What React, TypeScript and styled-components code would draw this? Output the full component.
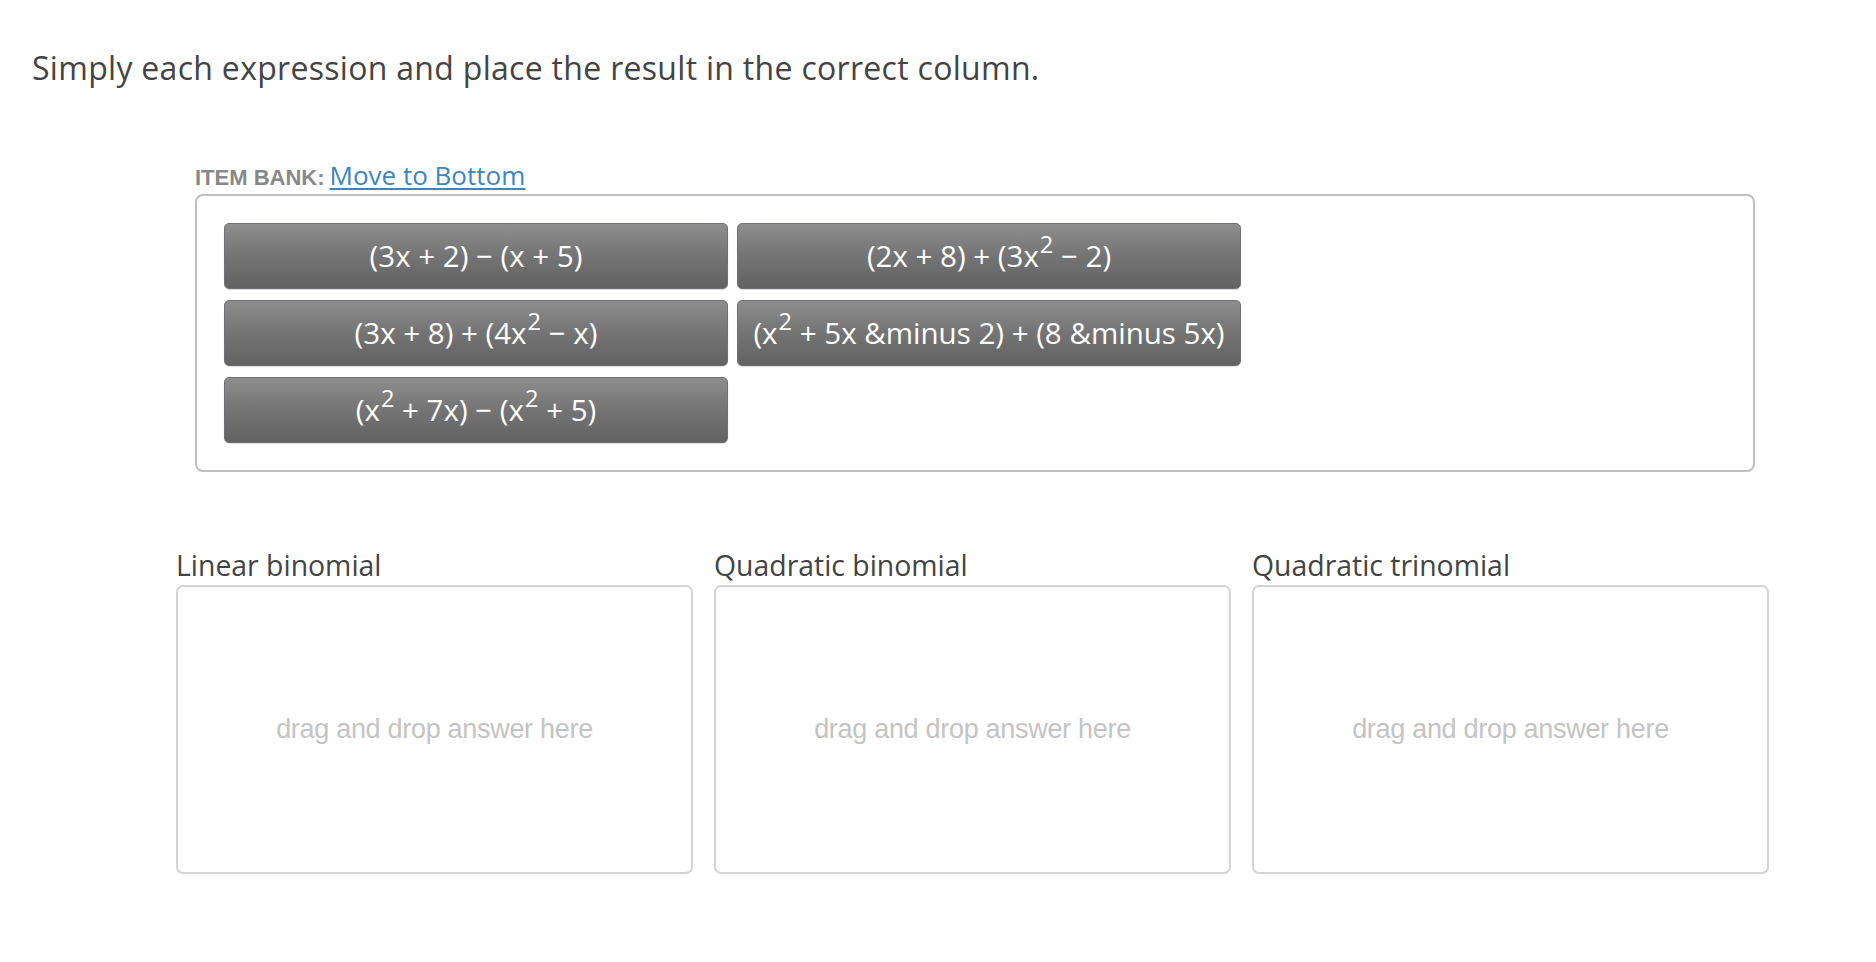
import React from 'react'
import styled, { createGlobalStyle } from 'styled-components'

const GlobalStyle = createGlobalStyle`
  html, body {
    margin: 0;
    padding: 0;
    background: #ffffff;
  }
  body {
    font-family: 'Open Sans', 'Noto Sans', sans-serif;
  }
`

const Page = styled.div`
  padding: 46px 0 60px 32px;
`

const Instruction = styled.p`
  margin: 0;
  font-family: 'Open Sans', 'Noto Sans', sans-serif;
  font-size: 32px;
  line-height: 44px;
  letter-spacing: 0.3px;
  color: #444444;
`

const Workspace = styled.div`
  margin: 67px 0 0 144px;
  width: 1594px;
`

const BankSection = styled.section`
  margin-left: 19px;
  width: 1560px;
`

const BankHeader = styled.div`
  display: flex;
  align-items: baseline;
  gap: 5px;
  height: 37px;
`

const BankLabel = styled.span`
  font-family: 'Liberation Sans', Arial, sans-serif;
  font-weight: 700;
  font-size: 22px;
  color: #888888;
`

const BankLink = styled.a`
  font-family: 'Open Sans', 'Noto Sans', sans-serif;
  font-size: 26px;
  color: #3a86c4;
  text-decoration: underline;
  text-underline-offset: 3px;
  cursor: pointer;
`

const BankBox = styled.div`
  box-sizing: border-box;
  height: 278px;
  border: 2px solid #bfbfbf;
  border-radius: 8px;
  padding: 27px 27px;
  display: grid;
  grid-template-columns: repeat(2, 504px);
  grid-auto-rows: 66px;
  column-gap: 9px;
  row-gap: 11px;
`

const Tile = styled.div`
  box-sizing: border-box;
  display: flex;
  align-items: center;
  justify-content: center;
  padding-bottom: 2px;
  border: 1px solid #6f6f75;
  border-radius: 5px;
  background: linear-gradient(to bottom, #8e8e8e 0%, #767676 45%, #626262 100%);
  color: #ffffff;
  font-family: 'Open Sans', 'Noto Sans', sans-serif;
  font-size: 29.5px;
  white-space: pre;
  box-shadow: 0 1px 1px rgba(0, 0, 0, 0.15);
  cursor: grab;

  sup {
    font-size: 0.8em;
    line-height: 0;
    position: relative;
    top: -0.1em;
    margin-left: 1px;
  }
`

const Columns = styled.div`
  display: grid;
  grid-template-columns: repeat(3, 517px);
  column-gap: 21px;
  margin-top: 78px;
`

const Column = styled.div`
  display: flex;
  flex-direction: column;
`

const ColumnTitle = styled.h3`
  margin: 0;
  height: 35px;
  font-family: 'Open Sans', 'Noto Sans', sans-serif;
  font-weight: 400;
  font-size: 28.4px;
  line-height: 30px;
  color: #444444;
`

const DropZone = styled.div`
  box-sizing: border-box;
  height: 289px;
  border: 2px solid #d4d4d4;
  border-radius: 7px;
  display: flex;
  align-items: center;
  justify-content: center;
`

const DropHint = styled.span`
  font-family: 'Liberation Sans', Arial, sans-serif;
  font-size: 27px;
  color: #c4c4c4;
  letter-spacing: -0.3px;
`

const tiles: React.ReactNode[] = [
  <>(3x + 2) − (x + 5)</>,
  <>(2x + 8) + (3x<sup>2</sup> − 2)</>,
  <>(3x + 8) + (4x<sup>2</sup> − x)</>,
  <>(x<sup>2</sup> + 5x &amp;minus 2) + (8 &amp;minus 5x)</>,
  <>(x<sup>2</sup> + 7x) − (x<sup>2</sup> + 5)</>,
]

const columns = ['Linear binomial', 'Quadratic binomial', 'Quadratic trinomial']

export default function App() {
  return (
    <>
      <GlobalStyle />
      <Page>
        <Instruction>Simply each expression and place the result in the correct column.</Instruction>
        <Workspace>
          <BankSection>
            <BankHeader>
              <BankLabel>ITEM BANK:</BankLabel>
              <BankLink>Move to Bottom</BankLink>
            </BankHeader>
            <BankBox>
              {tiles.map((t, i) => (
                <Tile key={i}>
                  <span>{t}</span>
                </Tile>
              ))}
            </BankBox>
          </BankSection>
          <Columns>
            {columns.map(c => (
              <Column key={c}>
                <ColumnTitle>{c}</ColumnTitle>
                <DropZone>
                  <DropHint>drag and drop answer here</DropHint>
                </DropZone>
              </Column>
            ))}
          </Columns>
        </Workspace>
      </Page>
    </>
  )
}
